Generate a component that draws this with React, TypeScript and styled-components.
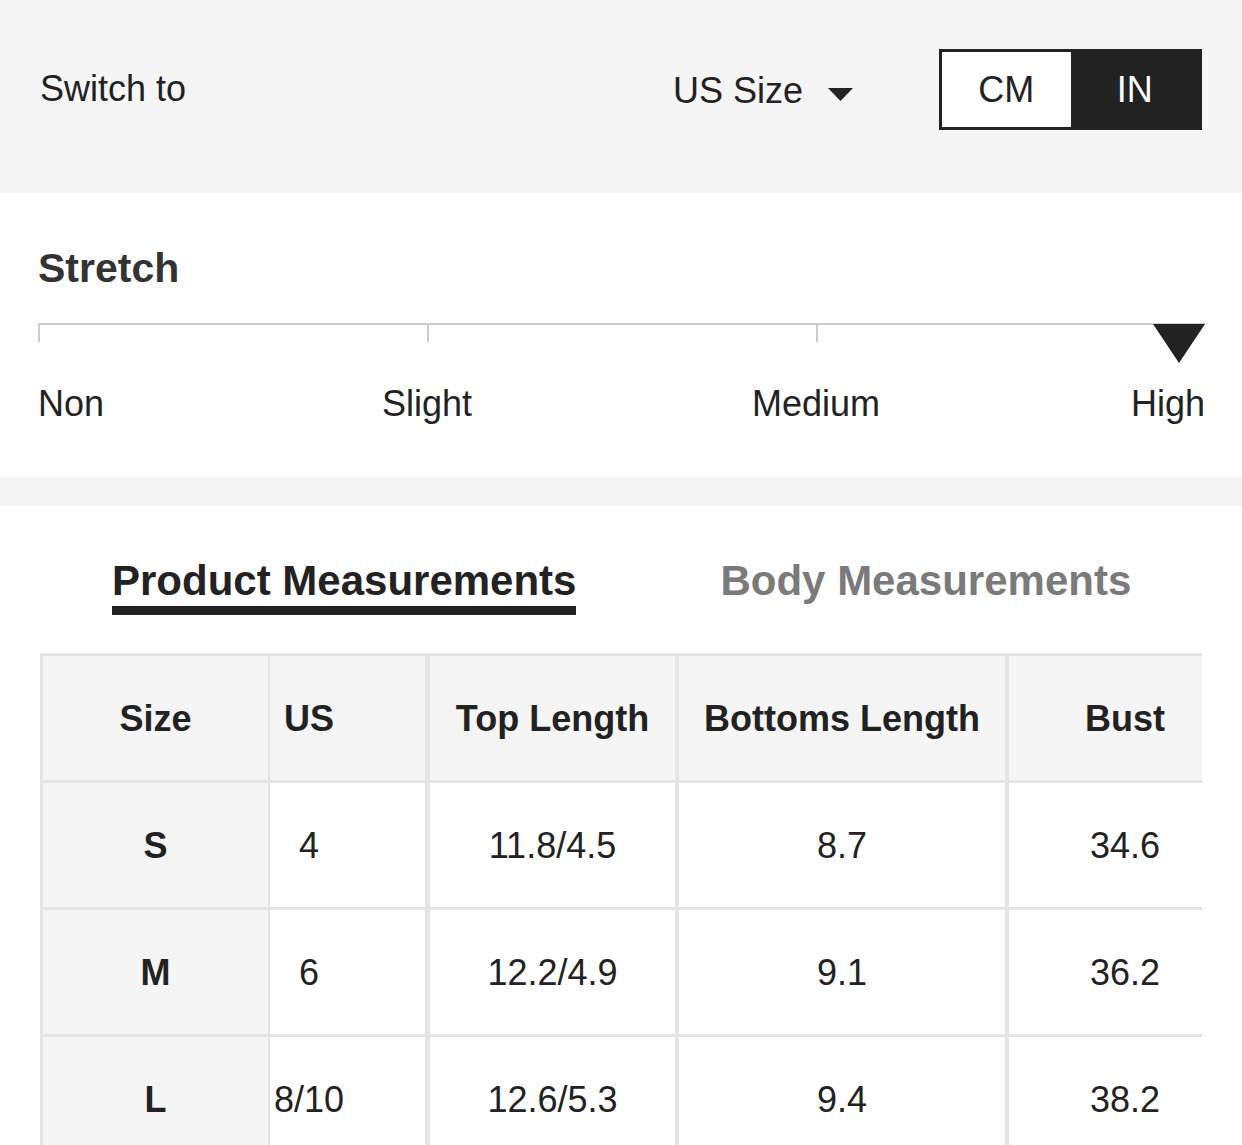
import React from "react";
import styled, { createGlobalStyle } from "styled-components";

const GlobalStyle = createGlobalStyle`
  html, body {
    margin: 0;
    padding: 0;
    background: #ffffff;
  }
  body {
    font-family: "Liberation Sans", Arial, Helvetica, sans-serif;
    color: #222222;
  }
  * { box-sizing: border-box; }
`;

const Page = styled.div`
  width: 1242px;
  background: #ffffff;
`;

/* ---------- Top bar ---------- */
const TopBar = styled.div`
  height: 193px;
  background: #f5f5f5;
  display: flex;
  align-items: center;
  padding: 0 40px 14px 40px;
`;

const BarLabel = styled.span`
  font-size: 36px;
  color: #222;
  margin-top: -1px;
`;

const SizeSelect = styled.div`
  margin-left: auto;
  margin-right: 86px;
  display: flex;
  align-items: center;
  gap: 25px;
  font-size: 36px;
  color: #222;
  margin-top: 2px;
`;

const Caret = styled.svg`
  width: 25px;
  height: 13px;
  margin-top: 8px;
  display: block;
`;

const UnitToggle = styled.div`
  display: flex;
  width: 263px;
  height: 81px;
  border: 3px solid #222;
`;

const UnitOption = styled.div<{ $active?: boolean }>`
  flex: 1;
  display: flex;
  align-items: center;
  justify-content: center;
  font-size: 36px;
  background: ${(p) => (p.$active ? "#222" : "#fff")};
  color: ${(p) => (p.$active ? "#fff" : "#222")};
`;

/* ---------- Stretch ---------- */
const StretchSection = styled.section`
  padding: 51px 37px 52px 38px;
  background: #fff;
`;

const SectionTitle = styled.h2`
  margin: 0;
  font-size: 41px;
  line-height: 48px;
  font-weight: 700;
  color: #333;
`;

const Scale = styled.div`
  position: relative;
  margin-top: 31px;
  height: 40px;
  display: grid;
  grid-template-columns: repeat(3, 1fr);
`;

const ScaleSegment = styled.div`
  height: 19px;
  border-top: 2px solid #cccccc;
  border-left: 2px solid #cccccc;
`;

const Marker = styled.div`
  position: absolute;
  right: 0;
  top: 1px;
  width: 0;
  height: 0;
  border-left: 26px solid transparent;
  border-right: 26px solid transparent;
  border-top: 39px solid #222;
`;

const LabelRow = styled.div`
  margin-top: 20px;
  display: grid;
  grid-template-columns: repeat(3, 1fr);
  font-size: 36px;
  line-height: 42px;
  color: #222;
`;

const LabelCell = styled.div`
  display: flex;
  justify-content: space-between;
`;

const ScaleLabel = styled.span<{ $shift?: boolean }>`
  transform: ${(p) => (p.$shift ? "translateX(-50%)" : "none")};
`;

const Divider = styled.div`
  height: 29px;
  background: #f5f5f5;
`;

/* ---------- Tabs ---------- */
const MeasureSection = styled.section`
  padding-top: 51px;
  background: #fff;
`;

const Tabs = styled.div`
  display: flex;
  padding-left: 112px;
  gap: 144px;
`;

const Tab = styled.div<{ $active?: boolean }>`
  font-size: 42px;
  line-height: 48px;
  font-weight: 700;
  padding-bottom: 1px;
  color: ${(p) => (p.$active ? "#222" : "#7a7a7a")};
  border-bottom: 9px solid ${(p) => (p.$active ? "#222" : "transparent")};
`;

/* ---------- Table ---------- */
const TableViewport = styled.div`
  margin: 38px 40px 0 40px;
  overflow: hidden;
`;

const Table = styled.div`
  display: grid;
  grid-template-columns: 228px 157px 250px 330px 236px;
  width: max-content;
`;

const Cell = styled.div<{
  $edge: number;
  $head?: boolean;
  $shade?: boolean;
  $bold?: boolean;
  $padRight?: number;
}>`
  height: 127px;
  border-top: 3px solid #e5e5e5;
  border-left: ${(p) => p.$edge}px solid #e5e5e5;
  background: ${(p) => (p.$head || p.$shade ? "#f5f5f5" : "#fff")};
  display: flex;
  align-items: center;
  justify-content: center;
  padding-right: ${(p) => p.$padRight ?? 0}px;
  padding-top: 2px;
  font-size: 36px;
  font-weight: ${(p) => (p.$head || p.$bold ? 700 : 400)};
  color: #222;
  white-space: nowrap;
`;

const columns = [
  { key: "size", label: "Size", edge: 3, pad: 0 },
  { key: "us", label: "US", edge: 2, pad: 77 },
  { key: "top", label: "Top Length", edge: 5, pad: 0 },
  { key: "bottom", label: "Bottoms Length", edge: 4, pad: 0 },
  { key: "bust", label: "Bust", edge: 4, pad: 0 },
];

const rows: Record<string, string>[] = [
  { size: "S", us: "4", top: "11.8/4.5", bottom: "8.7", bust: "34.6" },
  { size: "M", us: "6", top: "12.2/4.9", bottom: "9.1", bust: "36.2" },
  { size: "L", us: "8/10", top: "12.6/5.3", bottom: "9.4", bust: "38.2" },
];

export default function App() {
  return (
    <Page>
      <GlobalStyle />
      <TopBar>
        <BarLabel>Switch to</BarLabel>
        <SizeSelect>
          <span>US Size</span>
          <Caret viewBox="0 0 25 13">
            <polygon points="0,0 25,0 12.5,13" fill="#222" />
          </Caret>
        </SizeSelect>
        <UnitToggle>
          <UnitOption>CM</UnitOption>
          <UnitOption $active>IN</UnitOption>
        </UnitToggle>
      </TopBar>

      <StretchSection>
        <SectionTitle>Stretch</SectionTitle>
        <Scale>
          <ScaleSegment />
          <ScaleSegment />
          <ScaleSegment />
          <Marker />
        </Scale>
        <LabelRow>
          <LabelCell>
            <ScaleLabel>Non</ScaleLabel>
          </LabelCell>
          <LabelCell>
            <ScaleLabel $shift>Slight</ScaleLabel>
          </LabelCell>
          <LabelCell>
            <ScaleLabel $shift>Medium</ScaleLabel>
            <ScaleLabel>High</ScaleLabel>
          </LabelCell>
        </LabelRow>
      </StretchSection>

      <Divider />

      <MeasureSection>
        <Tabs>
          <Tab $active>Product Measurements</Tab>
          <Tab>Body Measurements</Tab>
        </Tabs>
        <TableViewport>
          <Table>
            {columns.map((c) => (
              <Cell key={c.key} $edge={c.edge} $head $padRight={c.pad}>
                {c.label}
              </Cell>
            ))}
            {rows.map((r) =>
              columns.map((c) => (
                <Cell
                  key={r.size + c.key}
                  $edge={c.edge}
                  $shade={c.key === "size"}
                  $bold={c.key === "size"}
                  $padRight={c.pad}
                >
                  {r[c.key]}
                </Cell>
              ))
            )}
          </Table>
        </TableViewport>
      </MeasureSection>
    </Page>
  );
}
